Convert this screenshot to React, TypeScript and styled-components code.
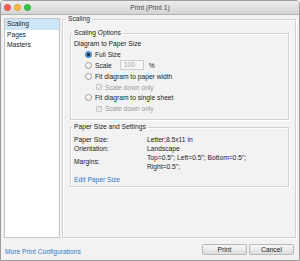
import React from 'react';
import styled, { createGlobalStyle } from 'styled-components';

const GlobalStyle = createGlobalStyle`
  html, body {
    margin: 0;
    padding: 0;
    background: #ffffff;
  }
  body {
    font-family: "Liberation Sans", Arial, sans-serif;
    font-size: 6.7px;
    color: #222222;
  }
`;

const Window = styled.div`
  width: 300px;
  height: 261px;
  box-sizing: border-box;
  border: 1px solid #9c9c9c;
  border-radius: 4px 4px 0 0;
  background: #f2f2f2;
  display: flex;
  flex-direction: column;
  overflow: hidden;
`;

const TitleBar = styled.div`
  height: 13px;
  display: grid;
  grid-template-columns: 36px 1fr 36px;
  align-items: center;
  border-bottom: 1px solid #b3b3b3;
  background: linear-gradient(#ededed, #d4d4d4);
`;

const Lights = styled.div`
  display: flex;
  gap: 3px;
  padding-left: 3px;
`;

const Light = styled.span<{ $c: string; $b: string }>`
  width: 7px;
  height: 7px;
  border-radius: 50%;
  box-sizing: border-box;
  background: ${(p) => p.$c};
  border: 0.5px solid ${(p) => p.$b};
`;

const Title = styled.div`
  text-align: center;
  color: #4a4a4a;
  line-height: 13px;
`;

const Body = styled.div`
  flex: 1;
  display: flex;
  flex-direction: column;
  padding: 0 3px;
`;

const Content = styled.div`
  flex: 1;
  display: flex;
  min-height: 0;
`;

const Sidebar = styled.div`
  margin-top: 3px;
  width: 56px;
  box-sizing: border-box;
  border: 1px solid #c6c6c6;
  background: #ffffff;
`;

const SideItem = styled.div<{ $active?: boolean }>`
  height: 10.5px;
  line-height: 10.5px;
  padding-left: 2px;
  background: ${(p) => (p.$active ? '#cde7f8' : 'transparent')};
`;

const Group = styled.fieldset`
  margin: 0;
  min-width: 0;
  border: 1px solid #d2d2d2;
  box-shadow: inset 1px 1px 0 #ffffff, 1px 1px 0 #ffffff;
`;

const MainGroup = styled(Group)`
  flex: 1;
  margin-left: 2px;
  padding: 6px 0 0 0;
`;

const InnerGroup = styled(Group)<{ $gap?: number }>`
  margin: ${(p) => p.$gap ?? 0}px 6px 0 7px;
  padding: 0 3px;
`;

const Legend = styled.legend`
  padding: 0 2px;
  margin-left: -2px;
  line-height: 8px;
`;

const OptionsBody = styled.div`
  padding: 1.5px 0 5px 0;
`;

const Row = styled.div<{ $indent?: number }>`
  display: flex;
  align-items: center;
  height: 10.8px;
  padding-left: ${(p) => p.$indent ?? 0}px;
`;

const Radio = styled.span<{ $on?: boolean }>`
  width: 7px;
  height: 7px;
  box-sizing: border-box;
  border-radius: 50%;
  margin-right: 3px;
  display: flex;
  align-items: center;
  justify-content: center;
  border: 0.6px solid ${(p) => (p.$on ? '#2f6fbf' : '#9b9b9b')};
  background: ${(p) =>
    p.$on ? 'linear-gradient(#79b8f5, #2f86e0)' : 'linear-gradient(#ffffff, #ececec)'};
  &::after {
    content: '';
    display: ${(p) => (p.$on ? 'block' : 'none')};
    width: 2.4px;
    height: 2.4px;
    border-radius: 50%;
    background: #1c2530;
  }
`;

const Check = styled.span`
  width: 6px;
  height: 6px;
  box-sizing: border-box;
  border: 0.6px solid #c4c4c4;
  border-radius: 1px;
  background: #f7f7f7;
  margin-right: 3px;
  display: flex;
  align-items: center;
  justify-content: center;
`;

const Dim = styled.span`
  color: #9a9a9a;
`;

const ScaleInput = styled.span`
  margin-left: 8px;
  width: 24px;
  height: 10px;
  box-sizing: border-box;
  border: 1px solid #cccccc;
  background: #f6f6f6;
  color: #a6a6a6;
  padding-left: 3px;
  line-height: 8px;
`;

const Percent = styled.span`
  margin-left: 5px;
`;

const InfoGrid = styled.div`
  display: grid;
  grid-template-columns: 73px 1fr;
  line-height: 9px;
  padding-top: 3.5px;
  align-items: center;
`;

const LinkText = styled.span`
  color: #2f78c4;
`;

const EditRow = styled.div`
  line-height: 9px;
  margin-top: 4px;
  padding-bottom: 2.5px;
`;

const Footer = styled.div`
  height: 22px;
  display: flex;
  align-items: center;
  justify-content: space-between;
  padding: 0 2px 0 1px;
`;

const FooterLink = styled(LinkText)`
  align-self: flex-end;
  margin-bottom: 4px;
  line-height: 9px;
`;

const Buttons = styled.div`
  display: flex;
  gap: 2px;
`;

const Button = styled.div`
  width: 45px;
  height: 11px;
  box-sizing: border-box;
  border: 1px solid #b8b8b8;
  border-radius: 2px;
  background: linear-gradient(#f7f7f7, #dcdcdc);
  text-align: center;
  line-height: 9px;
`;

const Tick = () => (
  <svg width="5" height="5" viewBox="0 0 10 10">
    <path d="M1.5 5.5 L4 8 L9 1" fill="none" stroke="#a0a0a0" strokeWidth="1.6" />
  </svg>
);

const App = () => {
  return (
    <>
      <GlobalStyle />
      <Window>
        <TitleBar>
          <Lights>
            <Light $c="#fc615d" $b="#df4744" />
            <Light $c="#fdbc40" $b="#de9f34" />
            <Light $c="#34c84a" $b="#27aa35" />
          </Lights>
          <Title>Print (Print 1)</Title>
          <div />
        </TitleBar>
        <Body>
          <Content>
            <Sidebar>
              <SideItem $active>Scaling</SideItem>
              <SideItem>Pages</SideItem>
              <SideItem>Masters</SideItem>
            </Sidebar>
            <MainGroup>
              <Legend style={{ marginLeft: 3 }}>Scaling</Legend>
              <InnerGroup>
                <Legend>Scaling Options</Legend>
                <OptionsBody>
                  <Row>Diagram to Paper Size</Row>
                  <Row $indent={11}>
                    <Radio $on />
                    Full Size
                  </Row>
                  <Row $indent={11}>
                    <Radio />
                    Scale
                    <ScaleInput>100</ScaleInput>
                    <Percent>%</Percent>
                  </Row>
                  <Row $indent={11}>
                    <Radio />
                    Fit diagram to paper width
                  </Row>
                  <Row $indent={22}>
                    <Check>
                      <Tick />
                    </Check>
                    <Dim>Scale down only</Dim>
                  </Row>
                  <Row $indent={11}>
                    <Radio />
                    Fit diagram to single sheet
                  </Row>
                  <Row $indent={22}>
                    <Check>
                      <Tick />
                    </Check>
                    <Dim>Scale down only</Dim>
                  </Row>
                </OptionsBody>
              </InnerGroup>
              <InnerGroup $gap={3}>
                <Legend>Paper Size and Settings</Legend>
                <InfoGrid>
                  <span>Paper Size:</span>
                  <span>Letter;8.5x11 in</span>
                  <span>Orientation:</span>
                  <span>Landscape</span>
                  <span>Margins:</span>
                  <span>
                    Top=0.5"; Left=0.5"; Bottom=0.5";
                    <br />
                    Right=0.5";
                  </span>
                </InfoGrid>
                <EditRow>
                  <LinkText>Edit Paper Size</LinkText>
                </EditRow>
              </InnerGroup>
            </MainGroup>
          </Content>
          <Footer>
            <FooterLink>More Print Configurations</FooterLink>
            <Buttons>
              <Button>Print</Button>
              <Button>Cancel</Button>
            </Buttons>
          </Footer>
        </Body>
      </Window>
    </>
  );
};

export default App;
